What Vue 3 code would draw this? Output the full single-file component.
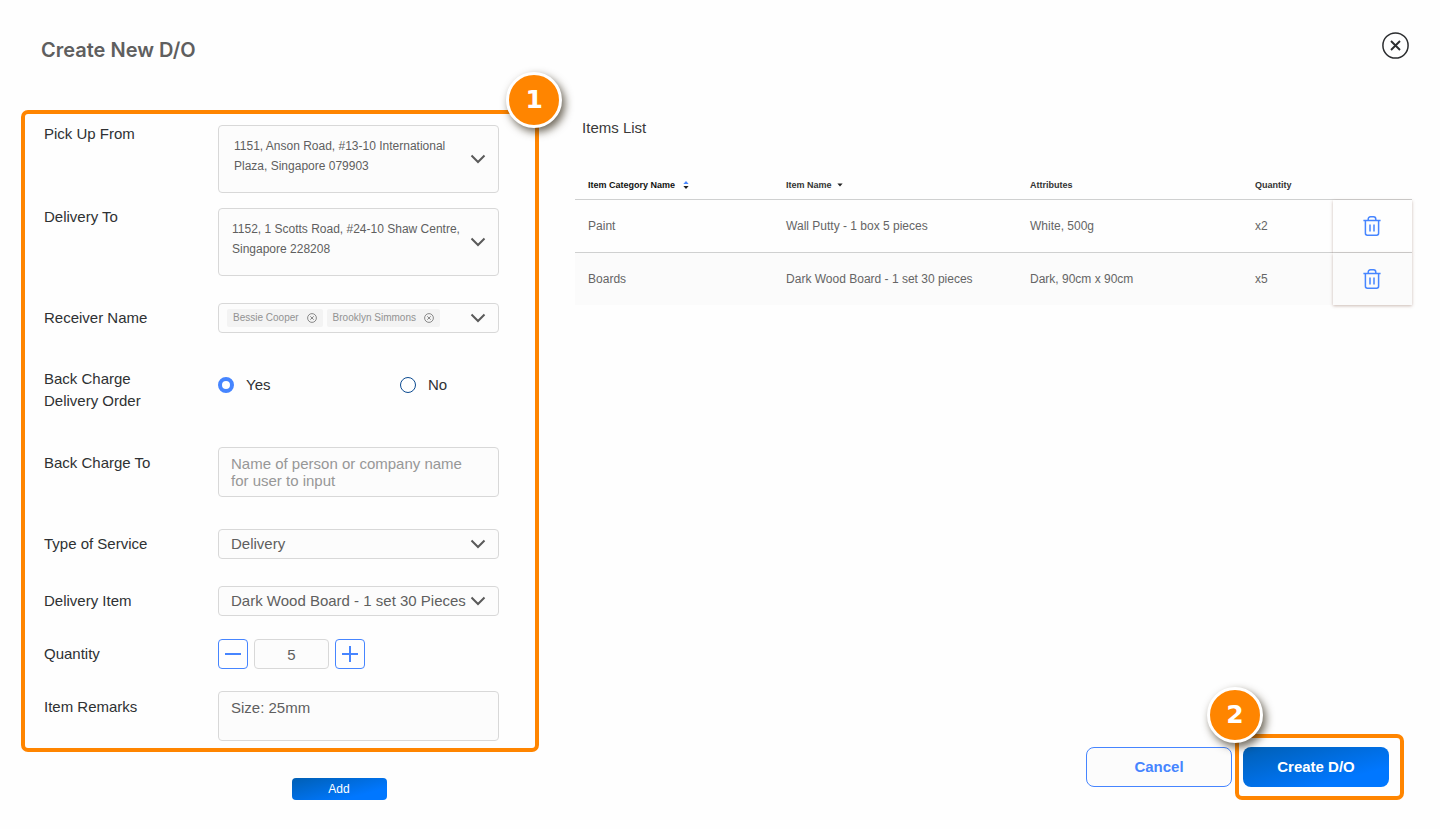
<script setup>
import { ref } from 'vue'

const pickUp = ref('1151, Anson Road, #13-10 International Plaza, Singapore 079903')
const deliverTo = ref('1152, 1 Scotts Road, #24-10 Shaw Centre, Singapore 228208')
const receivers = ref(['Bessie Cooper', 'Brooklyn Simmons'])
const backCharge = ref('yes')
const backChargeTo = ref('')
const service = ref('Delivery')
const item = ref('Dark Wood Board - 1 set 30 Pieces')
const quantity = ref('5')
const remarks = ref('Size: 25mm')
const items = ref([
  { category: 'Paint', name: 'Wall Putty - 1 box 5 pieces', attributes: 'White, 500g', quantity: 'x2' },
  { category: 'Boards', name: 'Dark Wood Board - 1 set 30 pieces', attributes: 'Dark, 90cm x 90cm', quantity: 'x5' }
])

function step(by) {
  quantity.value = String(Math.max(1, Number(quantity.value) + by))
}
function removeReceiver(name) {
  receivers.value = receivers.value.filter((r) => r !== name)
}
</script>

<template>
  <main class="page">
    <header class="top">
      <h1>Create New D/O</h1>
      <button class="close" type="button" aria-label="Close">
        <svg width="27" height="27" viewBox="0 0 27 27" fill="none" stroke="#2b2d2f">
          <circle cx="13.5" cy="13.5" r="12.6" stroke-width="1.5" />
          <path d="M9 9l9 9M18 9l-9 9" stroke-width="1.9" />
        </svg>
      </button>
    </header>

    <div class="workspace">
      <form class="left" @submit.prevent>
        <section class="panel">
          <span class="badge badge-one">1</span>

          <div class="row">
            <label for="pickup">Pick Up From</label>
            <div class="picker tall">
              <select id="pickup" v-model="pickUp"><option :value="pickUp"></option></select>
              <span class="address inset">{{ pickUp }}</span>
              <svg class="chevron" width="16" height="10" viewBox="0 0 16 10"><path d="M1.5 1.5L8 8l6.5-6.5" /></svg>
            </div>
          </div>

          <div class="row gap-s">
            <label for="deliver">Delivery To</label>
            <div class="picker tall">
              <select id="deliver" v-model="deliverTo"><option :value="deliverTo"></option></select>
              <span class="address">{{ deliverTo }}</span>
              <svg class="chevron" width="16" height="10" viewBox="0 0 16 10"><path d="M1.5 1.5L8 8l6.5-6.5" /></svg>
            </div>
          </div>

          <div class="row middle gap-l">
            <label for="receiver">Receiver Name</label>
            <div class="picker">
              <select id="receiver"><option value=""></option></select>
              <span class="chips">
                <span v-for="name in receivers" :key="name" class="chip">
                  {{ name }}
                  <button type="button" :aria-label="'Remove ' + name" @click="removeReceiver(name)">
                    <svg width="10" height="10" viewBox="0 0 10 10" fill="none" stroke="#7d7d7d">
                      <circle cx="5" cy="5" r="4.4" stroke-width="0.9" />
                      <path d="M3.3 3.3l3.4 3.4M6.7 3.3L3.3 6.7" stroke-width="0.9" />
                    </svg>
                  </button>
                </span>
              </span>
              <svg class="chevron" width="16" height="10" viewBox="0 0 16 10"><path d="M1.5 1.5L8 8l6.5-6.5" /></svg>
            </div>
          </div>

          <div class="row gap-xl" role="radiogroup" aria-labelledby="charge">
            <span id="charge" class="label two-line">Back Charge<br />Delivery Order</span>
            <div class="radios">
              <label><input v-model="backCharge" type="radio" name="charge" value="yes" />Yes</label>
              <label><input v-model="backCharge" type="radio" name="charge" value="no" />No</label>
            </div>
          </div>

          <div class="row gap-xl">
            <label class="drop" for="chargeto">Back Charge To</label>
            <textarea id="chargeto" v-model="backChargeTo" placeholder="Name of person or company name for user to input"></textarea>
          </div>

          <div class="row middle gap-service">
            <label for="service">Type of Service</label>
            <div class="picker">
              <select id="service" v-model="service"><option>Delivery</option></select>
              <svg class="chevron" width="16" height="10" viewBox="0 0 16 10"><path d="M1.5 1.5L8 8l6.5-6.5" /></svg>
            </div>
          </div>

          <div class="row middle gap-l">
            <label for="item">Delivery Item</label>
            <div class="picker">
              <select id="item" v-model="item"><option>Dark Wood Board - 1 set 30 Pieces</option></select>
              <svg class="chevron" width="16" height="10" viewBox="0 0 16 10"><path d="M1.5 1.5L8 8l6.5-6.5" /></svg>
            </div>
          </div>

          <div class="row middle gap-m">
            <label for="qty">Quantity</label>
            <div class="stepper">
              <button type="button" aria-label="Decrease" @click="step(-1)">
                <svg width="16" height="16" viewBox="0 0 16 16"><path d="M0 8h16" /></svg>
              </button>
              <input id="qty" v-model="quantity" type="text" inputmode="numeric" />
              <button type="button" aria-label="Increase" @click="step(1)">
                <svg width="16" height="16" viewBox="0 0 16 16"><path d="M0 8h16M8 0v16" /></svg>
              </button>
            </div>
          </div>

          <div class="row gap-remarks">
            <label class="drop" for="remarks">Item Remarks</label>
            <textarea id="remarks" v-model="remarks"></textarea>
          </div>
        </section>

        <div class="add-row">
          <button class="add" type="button">Add</button>
        </div>
      </form>

      <section class="right">
        <h2>Items List</h2>
        <table>
          <colgroup>
            <col class="c-category" />
            <col />
            <col class="c-attributes" />
            <col class="c-quantity" />
            <col class="c-action" />
          </colgroup>
          <thead>
            <tr>
              <th class="sorted">
                Item Category Name
                <svg class="sort" width="6" height="8" viewBox="0 0 6 8">
                  <path d="M3 0l2.6 3H.4z" fill="#4685ff" /><path d="M3 8L.4 5h5.2z" fill="#222" />
                </svg>
              </th>
              <th>
                Item Name
                <svg class="caret" width="6" height="4" viewBox="0 0 6 4"><path d="M3 3.6L.4.4h5.2z" fill="#222" /></svg>
              </th>
              <th>Attributes</th>
              <th>Quantity</th>
              <th aria-label="Actions"></th>
            </tr>
          </thead>
          <tbody>
            <tr v-for="row in items" :key="row.category">
              <td>{{ row.category }}</td>
              <td>{{ row.name }}</td>
              <td>{{ row.attributes }}</td>
              <td>{{ row.quantity }}</td>
              <td class="action">
                <button type="button" :aria-label="'Delete ' + row.category">
                  <svg width="18" height="20" viewBox="0 0 18 20" fill="none" stroke="#4685ff" stroke-width="1.5">
                    <path d="M.4 4.600h17.200M5.200 4.600V3.200c0-1.400.9-2.400 2.300-2.400h3c1.400 0 2.300 1 2.300 2.400v1.400M2.400 4.600v12.700c0 1.200.7 1.900 1.900 1.900h9.400c1.200 0 1.900-.7 1.900-1.900V4.600M7 8.400v7M11 8.400v7" />
                  </svg>
                </button>
              </td>
            </tr>
          </tbody>
        </table>

        <div class="actions">
          <button class="cancel" type="button">Cancel</button>
          <div class="frame">
            <span class="badge badge-two">2</span>
            <button class="create" type="button">Create D/O</button>
          </div>
        </div>
      </section>
    </div>
  </main>
</template>

<style>
body {
  margin: 0;
  background: #fefefe;
}
</style>

<style scoped>
.page,
.page * {
  box-sizing: border-box;
}
.page {
  min-height: 100vh;
  display: flex;
  flex-direction: column;
  font-family: "Liberation Sans", Arial, sans-serif;
  font-size: 15px;
  line-height: 18px;
  color: #2e3133;
}
button,
input,
select,
textarea {
  font: inherit;
  margin: 0;
}
button {
  padding: 0;
  border: 0;
  background: none;
  cursor: pointer;
}
svg {
  display: block;
}
.top {
  display: flex;
  justify-content: space-between;
  align-items: flex-start;
  padding: 32px 31px 48px 41px;
}
h1 {
  margin: 6px 0 0;
  font: 600 20px/24px Inter, sans-serif;
  color: #5f5f5f;
}
.workspace {
  flex: 1;
  display: grid;
  grid-template-columns: minmax(480px, 13fr) minmax(0, 21fr);
  column-gap: 36px;
  padding: 0 28px 29px 21px;
}

.panel {
  position: relative;
  padding: 11px 36px 7px 19px;
  border: 4px solid #ff8500;
  border-radius: 7px;
}
.row {
  display: grid;
  grid-template-columns: 174px minmax(0, 1fr);
  align-items: start;
}
.middle {
  align-items: center;
}
.gap-s { margin-top: 15px; }
.gap-remarks { margin-top: 22px; }
.gap-m { margin-top: 23px; }
.gap-l { margin-top: 27px; }
.gap-service { margin-top: 32px; }
.gap-xl { margin-top: 35px; }
.two-line {
  line-height: 22px;
}
.drop {
  padding-top: 7px;
}

.picker {
  display: grid;
  align-items: center;
  min-height: 30px;
}
.picker > * {
  grid-area: 1 / 1;
}
.picker select {
  appearance: none;
  align-self: stretch;
  width: 100%;
  padding: 0 32px 0 12px;
}
.picker select,
textarea,
.stepper input {
  border: 1px solid #d8d8d8;
  border-radius: 4px;
  background: #fcfcfc;
  color: #5f5f5f;
  outline: none;
}
.tall {
  min-height: 68px;
}
.address {
  align-self: start;
  padding: 11px 36px 0 14px;
  font-size: 12px;
  line-height: 20px;
  color: #5f5f5f;
  pointer-events: none;
}
.inset {
  padding-left: 16px;
}
.chevron {
  justify-self: end;
  margin-right: 13px;
  fill: none;
  stroke: #5a5a5a;
  stroke-width: 2;
  pointer-events: none;
}
.chips {
  display: flex;
  gap: 4px;
  padding-left: 9px;
  pointer-events: none;
}
.chip {
  display: flex;
  align-items: center;
  gap: 8px;
  padding: 0 6px;
  border-radius: 2px;
  background: #f3f3f3;
  font-size: 10px;
  color: #929292;
}
.chip button {
  pointer-events: auto;
}
.radios {
  display: grid;
  grid-template-columns: 182px 1fr;
  padding-top: 8px;
}
.radios label {
  display: flex;
  align-items: center;
  gap: 12px;
}
.radios input {
  appearance: none;
  width: 16px;
  height: 16px;
  border: 1px solid #0b4a90;
  border-radius: 50%;
  background: #fff;
}
.radios input:checked {
  border: 4px solid #4685ff;
}
textarea {
  display: block;
  width: 100%;
  height: 50px;
  padding: 7px 20px 7px 12px;
  line-height: 17px;
  resize: none;
}
textarea::placeholder {
  color: #979797;
}
.stepper {
  display: flex;
  gap: 6px;
}
.stepper button {
  display: grid;
  place-items: center;
  width: 30px;
  height: 30px;
  border: 1px solid #4685ff;
  border-radius: 4px;
}
.stepper path {
  stroke: #4685ff;
  stroke-width: 2;
}
.stepper input {
  width: 75px;
  height: 30px;
  padding: 0;
  text-align: center;
}
.add-row {
  display: flex;
  justify-content: center;
  padding: 26px 0 0 118px;
}
.add,
.create {
  background: linear-gradient(165deg, #005fb4 0%, #0077ff 75%);
  color: #fff;
}
.add {
  width: 95px;
  height: 22px;
  border-radius: 4px;
  font-size: 12px;
}

.right {
  display: flex;
  flex-direction: column;
}
h2 {
  margin: 9px 0 33px;
  padding-left: 7px;
  font-size: 15px;
  font-weight: 400;
  color: #3a3a3a;
}
table {
  width: 100%;
  table-layout: fixed;
  border-spacing: 0;
  font-size: 12px;
  color: #656565;
}
.c-category { width: 211px; }
.c-attributes { width: 225px; }
.c-quantity { width: 78px; }
.c-action { width: 79px; }
th,
td {
  padding: 0;
  text-align: left;
}
th:first-child,
td:first-child {
  padding-left: 13px;
}
th {
  height: 30px;
  border-bottom: 1px solid #cfd0d0;
  font-size: 9px;
  color: #333;
}
th svg {
  display: inline-block;
  vertical-align: middle;
}
.sorted {
  color: #111;
}
.sort {
  margin-left: 5px;
}
.caret {
  margin-left: 3px;
}
td {
  height: 53px;
  border-bottom: 1px solid #cfd0d0;
}
tbody tr:last-child td {
  height: 52px;
  border-bottom: 0;
  background: #fbfbfb;
}
.action {
  box-shadow: 0 1px 3px rgba(110, 60, 40, 0.35);
}
.action button {
  display: block;
  margin: 0 auto;
}

.actions {
  display: flex;
  align-items: center;
  justify-content: flex-end;
  gap: 3px;
  margin-top: auto;
  padding-right: 8px;
}
.cancel,
.create {
  width: 146px;
  height: 40px;
  border-radius: 8px;
  font-weight: 700;
}
.cancel {
  border: 1px solid #4685ff;
  background: #fcfcfc;
  color: #4685ff;
}
.frame {
  position: relative;
  padding: 9px 11px 9px 4px;
  border: 4px solid #ff8500;
  border-radius: 7px;
}
.create {
  display: block;
}
.badge {
  position: absolute;
  display: grid;
  place-items: center;
  width: 56px;
  height: 56px;
  border: 3px solid #fff;
  border-radius: 50%;
  background: #ff8500;
  box-shadow: 3px 4px 8px rgba(45, 35, 15, 0.7);
  color: #fff;
  font: 700 25px/30px "DejaVu Sans", sans-serif;
}
.badge-one {
  top: -42px;
  right: -27px;
}
.badge-two {
  top: -51px;
  left: -32px;
}
</style>
